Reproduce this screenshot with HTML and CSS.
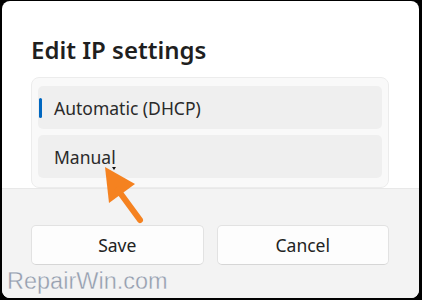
FILE: index.html
```html
<!DOCTYPE html>
<html lang="en">
<head>
    <meta charset="UTF-8">
    <meta name="viewport" content="width=device-width, initial-scale=1.0">
    <title>Edit IP settings</title>
    <link rel="stylesheet" href="styles.css">
</head>
<body>
    <div class="dialog">
        <div class="content">
            <h1>Edit IP settings</h1>
            <div class="options">
                <div class="option selected">Automatic (DHCP)</div>
                <div class="option">Manual</div>
            </div>
        </div>
        <div class="footer">
            <button type="button">Save</button>
            <button type="button">Cancel</button>
        </div>
    </div>

    <!-- pointer arrow drawn over the screenshot -->
    <svg class="arrow" width="60" height="70" viewBox="0 0 60 70">
        <polygon points="5,2 9,38 35,19" fill="#f58220"/>
        <line x1="18" y1="25" x2="40" y2="55" stroke="#f58220" stroke-width="6" stroke-linecap="round"/>
        <polygon points="12,2 16,2 14,5" fill="#111"/>
    </svg>
    <div class="watermark">RepairWin.com</div>
</body>
</html>
```
FILE: styles.css
```css
body {
    margin: 0;
    background-color: #000;
    width: 422px;
    height: 300px;
    font-family: "Noto Sans", "Open Sans", sans-serif;
    color: #222;
    overflow: hidden;
    position: relative;
}
.dialog {
    margin: 1px 3px 0 2px;
    height: 297px;
    border-radius: 8px;
    overflow: hidden;
    background-color: #fff;
    display: flex;
    flex-direction: column;
}
.content {
    height: 187px;
    padding: 0 30px 0 29px;
    overflow: hidden;
}
h1 {
    font-size: 24px;
    font-weight: 600;
    margin: 34px 0 0 0;
    line-height: 30px;
    color: #1f1f1f;
}
.options {
    margin-top: 12px;
    background-color: #f9f9f9;
    border: 1px solid #ececec;
    border-radius: 8px;
    padding: 8px 6px 9px 6px;
    display: flex;
    flex-direction: column;
    gap: 6px;
}
.option {
    height: 43px;
    background-color: #efefef;
    border-radius: 5px;
    display: flex;
    align-items: center;
    padding-left: 16px;
    font-size: 17.5px;
    color: #2a2a2a;
    position: relative;
}
.option.selected::before {
    content: "";
    position: absolute;
    left: 1px;
    top: 12px;
    width: 3px;
    height: 20px;
    border-radius: 2px;
    background-color: #0067c0;
}
.footer {
    flex: 1;
    background-color: #f3f3f3;
    border-top: 1px solid #e8e8e8;
    padding: 36px 30px 0 29px;
    display: flex;
    gap: 13px;
    align-items: flex-start;
}
button {
    flex: 1;
    height: 40px;
    background-color: #fdfdfd;
    border: 1px solid #e2e2e2;
    border-bottom-color: #d6d6d6;
    border-radius: 5px;
    font-family: "Noto Sans", "Open Sans", sans-serif;
    font-size: 17.5px;
    color: #222;
}
.arrow {
    position: absolute;
    left: 100px;
    top: 165px;
}
.watermark {
    position: absolute;
    left: 7px;
    top: 268px;
    font-family: "Liberation Sans", Arial, sans-serif;
    font-size: 23.5px;
    color: #959eae;
    -webkit-text-stroke: 0.3px #fff;
}
```
